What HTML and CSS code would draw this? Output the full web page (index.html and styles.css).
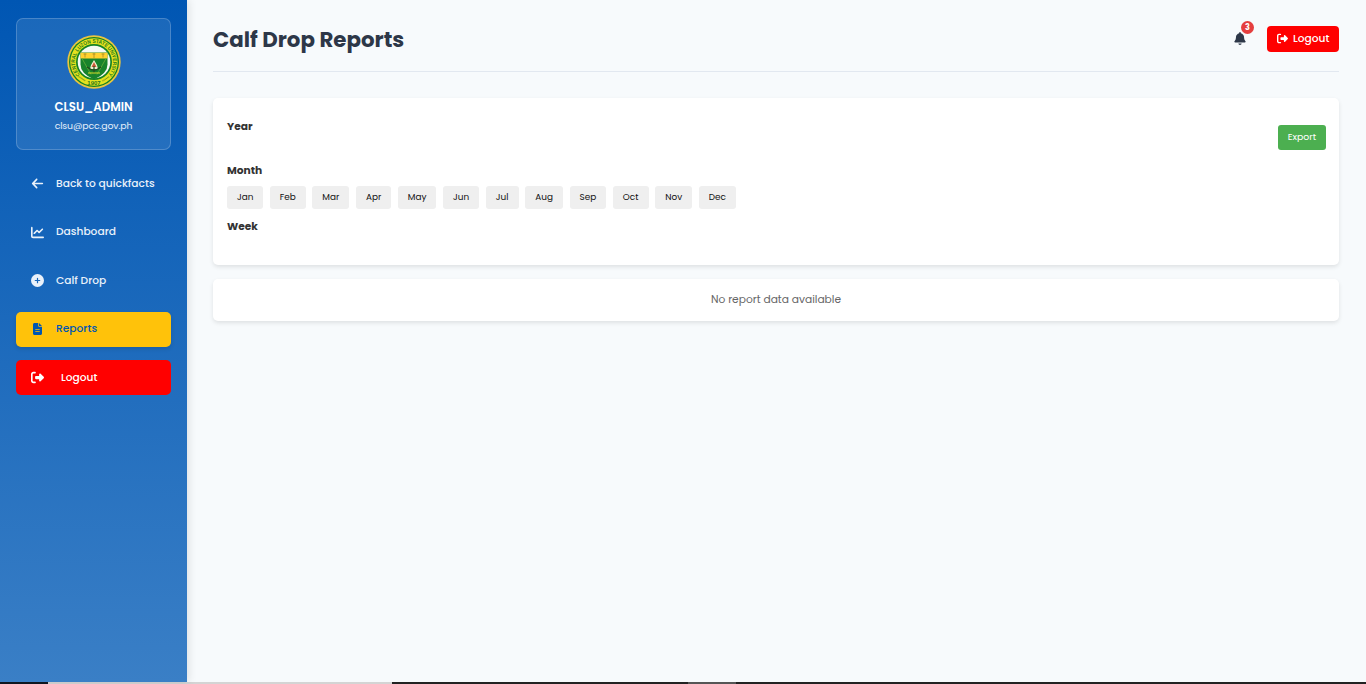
FILE: index.html
```html
<!DOCTYPE html>
<html lang="en">
<head>
<meta charset="utf-8">
<title>Calf Drop Reports</title>
<link rel="stylesheet" href="styles.css">
</head>
<body>
<svg class="defs" aria-hidden="true">
  <symbol id="signout" viewBox="0 0 512 512"><path fill="currentColor" d="M377.900 105.900L500.700 228.700c7.200 7.200 11.300 17.100 11.300 27.300s-4.100 20.100-11.300 27.300L377.900 406.100c-6.400 6.400-15 9.900-24 9.900c-18.700 0-33.900-15.200-33.900-33.900V320H192c-17.700 0-32-14.300-32-32V224c0-17.700 14.300-32 32-32H320V129.900c0-18.700 15.200-33.900 33.900-33.900c9 0 17.600 3.600 24 9.900zM160 96H96c-17.700 0-32 14.300-32 32V384c0 17.700 14.300 32 32 32h64c17.700 0 32 14.300 32 32s-14.300 32-32 32H96c-53 0-96-43-96-96V128C0 75 43 32 96 32h64c17.700 0 32 14.300 32 32s-14.300 32-32 32z"/></symbol>
</svg>
<div class="app">
  <aside class="sidebar">
    <section class="profile">
      <svg class="seal" viewBox="0 0 54 54">
        <defs>
          <path id="ring" d="M12.900 39.700A19 19 0 1 1 41.100 39.700"/>
          <clipPath id="shield"><path d="M13.500 17.500h27v12q0 9-13.500 15q-13.500-6-13.500-15z"/></clipPath>
        </defs>
        <circle cx="27" cy="27" r="26.700" fill="#e9c63e"/>
        <circle cx="27" cy="27" r="25" fill="#168223"/>
        <circle cx="27" cy="27" r="23.700" fill="#e3e21e"/>
        <circle cx="27" cy="27" r="18" fill="#168223"/>
        <circle cx="27" cy="27" r="16.300" fill="#f5faf3"/>
        <text class="seal-name" textLength="87" lengthAdjust="spacingAndGlyphs"><textPath href="#ring">CENTRAL LUZON STATE UNIVERSITY</textPath></text>
        <path d="M11.500 41.500l7 4.500M35.500 46l7-4.500" stroke="#77931c" stroke-width="1.200" stroke-dasharray="1 .4"/>
        <g clip-path="url(#shield)">
          <path fill="#18832b" d="M13 17h28v28H13z"/>
          <path fill="#ffd12e" d="M13 17.500h28v6H13z"/>
          <path d="M15 23.500l9 16M39 23.500l-9 16" stroke="#56a437"/>
          <path d="M18 18.500v4M27 18v5M36 18.500v4M16.500 19h3M25.500 19h3M34.500 19h3" stroke="#a38b24" stroke-width=".8"/>
          <path fill="#f0f2d0" d="M27 25l3 5 1 4h-8l1-4z"/>
          <path fill="#ca5a38" d="M27 27l2.500 5h-5z"/>
          <path d="M20 32l5 3h4l5-3M27 31v7" fill="none" stroke="#23491e" stroke-width="1.200"/>
          <path d="M21 38h12" stroke="#d4dc2c"/>
        </g>
        <text class="seal-year" x="27" y="49.900">1907</text>
      </svg>
      <div class="name">CLSU_ADMIN</div>
      <div class="email">clsu@pcc.gov.ph</div>
    </section>
    <nav class="menu">
      <a class="item"><svg class="icon" viewBox="-32 0 512 512"><path fill="currentColor" d="M9.400 233.400c-12.500 12.500-12.500 32.800 0 45.300l160 160c12.500 12.500 32.800 12.500 45.300 0s12.500-32.800 0-45.300L109.200 288H416c17.700 0 32-14.300 32-32s-14.300-32-32-32H109.300L214.600 118.600c12.500-12.500 12.500-32.800 0-45.300s-32.800-12.500-45.300 0l-160 160z"/></svg><span class="label">Back to quickfacts</span></a>
      <a class="item"><svg class="icon" viewBox="0 0 512 512"><path fill="currentColor" d="M64 64c0-17.700-14.300-32-32-32S0 46.300 0 64V400c0 44.200 35.800 80 80 80H480c17.700 0 32-14.300 32-32s-14.300-32-32-32H80c-8.800 0-16-7.200-16-16V64zm406.600 86.600c12.500-12.500 12.500-32.800 0-45.300s-32.800-12.500-45.300 0L320 210.700l-57.400-57.400c-12.500-12.500-32.800-12.500-45.300 0l-112 112c-12.500 12.500-12.500 32.800 0 45.300s32.800 12.500 45.300 0L240 221.300l57.400 57.400c12.500 12.500 32.800 12.500 45.300 0l128-128z"/></svg><span class="label">Dashboard</span></a>
      <a class="item"><svg class="icon" viewBox="0 0 512 512"><path fill="currentColor" d="M256 512A256 256 0 1 0 256 0a256 256 0 1 0 0 512zM232 344V280H168c-13.300 0-24-10.700-24-24s10.700-24 24-24h64V168c0-13.300 10.700-24 24-24s24 10.700 24 24v64h64c13.300 0 24 10.700 24 24s-10.700 24-24 24H280v64c0 13.300-10.700 24-24 24s-24-10.700-24-24z"/></svg><span class="label">Calf Drop</span></a>
      <a class="item active"><svg class="icon file" viewBox="-64 0 512 512"><path fill="currentColor" d="M64 0C28.700 0 0 28.700 0 64V448c0 35.300 28.700 64 64 64H320c35.300 0 64-28.700 64-64V160H256c-17.700 0-32-14.300-32-32V0H64zM256 0V128H384L256 0zM112 256H272c8.800 0 16 7.200 16 16s-7.200 16-16 16H112c-8.800 0-16-7.200-16-16s7.200-16 16-16zm0 96H272c8.800 0 16 7.200 16 16s-7.200 16-16 16H112c-8.800 0-16-7.200-16-16s7.200-16 16-16z"/></svg><span class="label">Reports</span></a>
      <a class="item logout"><svg class="icon"><use href="#signout"/></svg><span class="label out">Logout</span></a>
    </nav>
  </aside>
  <main class="main">
    <header class="header">
      <h1 class="title">Calf Drop Reports</h1>
      <div class="actions">
        <div class="bell"><svg class="bell-icon" viewBox="0 0 448 512"><path fill="currentColor" d="M224 0c-17.700 0-32 14.300-32 32V51.200C119 66 64 130.600 64 208v18.800c0 47-17.300 92.400-48.500 127.600l-7.400 8.300c-8.400 9.400-10.400 22.900-5.300 34.400S19.400 416 32 416H416c12.600 0 24-7.400 29.200-18.900s3.100-25-5.300-34.400l-7.400-8.300C401.300 319.200 384 273.900 384 226.800V208c0-77.400-55-142-128-156.800V32c0-17.700-14.300-32-32-32zm45.300 493.300c12-12 18.700-28.300 18.700-45.300H160c0 17 6.700 33.300 18.700 45.300s28.300 18.700 45.300 18.700s33.300-6.700 45.300-18.700z"/></svg><span class="badge">3</span></div>
        <button class="top-logout"><svg class="out-icon"><use href="#signout"/></svg><span>Logout</span></button>
      </div>
    </header>
    <section class="card filters">
      <div class="fields">
        <h2 class="field">Year</h2>
        <h2 class="field month">Month</h2>
        <div class="months">
          <button class="chip">Jan</button><button class="chip">Feb</button><button class="chip">Mar</button><button class="chip">Apr</button><button class="chip">May</button><button class="chip">Jun</button><button class="chip">Jul</button><button class="chip">Aug</button><button class="chip">Sep</button><button class="chip">Oct</button><button class="chip">Nov</button><button class="chip">Dec</button>
        </div>
        <h2 class="field week">Week</h2>
      </div>
      <button class="export">Export</button>
    </section>
    <section class="card empty"><span>No report data available</span></section>
  </main>
</div>
<footer class="edge"></footer>
</body>
</html>
```
FILE: styles.css
```css
* { box-sizing: border-box; }
body { margin: 0; height: 684px; overflow: hidden; background: #f7fafc; font-family: Poppins, Inter, sans-serif; color: #333; }
h1, h2 { margin: 0; }
button { border: 0; padding: 0; font-family: inherit; white-space: nowrap; }
svg { display: block; flex: none; }
.defs { display: none; }
.app { display: flex; height: 682px; }
.sidebar { width: 187px; flex: none; padding: 18px 16px; color: #fff; background: linear-gradient(#0056b3, #3a7fc6); box-shadow: 2px 0 8px rgba(0,0,0,.1); }
.profile { height: 132px; display: flex; flex-direction: column; align-items: center; padding-top: 16px; border: 1px solid rgba(255,255,255,.2); border-radius: 7px; background: rgba(255,255,255,.1); }
.seal { width: 54px; height: 54px; }
.seal-name { font: 700 5.400px "Liberation Sans", sans-serif; fill: #28781d; }
.seal-year { font: 700 6px "Liberation Sans", sans-serif; fill: #28781d; text-anchor: middle; }
.name { margin-top: 9px; font-size: 11.730px; line-height: 18px; font-weight: 600; }
.email { margin-top: 3px; font-size: 9.330px; line-height: 14px; color: #e3eefa; letter-spacing: -.130px; }
.menu { display: grid; gap: 13.500px; margin-top: 16px; }
.item { height: 35px; display: flex; align-items: center; padding-left: 15px; border-radius: 5px; color: #e9f1fa; font-size: 10.670px; line-height: 16px; font-weight: 500; white-space: nowrap; }
.icon { width: 13px; height: 13px; }
.file { height: 12px; margin-top: -1px; }
.label { margin-left: 12px; }
.active { color: #0056b3; background: #ffc20a; box-shadow: 0 2px 4px rgba(0,0,0,.12); }
.logout { color: #fff; background: #f00; }
.out { margin-left: 17px; }
.main { flex: 1; padding: 0 27px 0 26px; }
.header { height: 72px; display: flex; justify-content: space-between; border-bottom: 1px solid #e2e8f0; }
.title { margin-top: 23px; font-size: 21.330px; line-height: 34px; font-weight: 700; color: #2d3748; white-space: nowrap; }
.actions { display: flex; align-items: flex-start; padding-top: 26px; gap: 21px; }
.bell { position: relative; padding-top: 6px; color: #2d3748; }
.bell-icon { width: 12px; height: 13px; }
.badge { position: absolute; left: 7px; top: -5px; width: 13px; height: 13px; border-radius: 50%; background: #e53e3e; color: #fff; font-size: 8px; line-height: 13px; font-weight: 700; text-align: center; }
.top-logout { width: 72px; height: 26px; display: flex; align-items: center; gap: 5px; padding: 0 0 1px 10px; border-radius: 4px; background: #f00; color: #fff; font-size: 10.670px; line-height: 16px; font-weight: 500; }
.out-icon { width: 11px; height: 11px; }
.card { background: #fff; border-radius: 5px; box-shadow: 0 2px 4px rgba(0,0,0,.1); }
.filters { height: 167px; margin-top: 26px; padding: 21px 13px 0 14px; display: flex; justify-content: space-between; }
.field { font-size: 10.670px; line-height: 16px; font-weight: 700; }
.month { margin-top: 28px; }
.months { display: grid; grid-template-columns: 36.300px 35.800px 37px 35.400px 38.500px 36.200px 32.800px 38px 36.300px 36px 37px 37px; gap: 6.600px; margin-top: 7px; }
.chip { height: 23px; padding-bottom: 1px; border-radius: 3px; background: #efefef; color: #111; font-size: 8.890px; }
.week { margin-top: 10px; }
.export { width: 48px; height: 25px; padding-bottom: 2px; margin-top: 6px; border-radius: 3px; background: #4caf50; color: #fff; font-size: 9.330px; }
.empty { height: 42px; margin-top: 14px; display: flex; align-items: center; justify-content: center; color: #666; font-size: 10.670px; line-height: 16px; }
.edge { height: 2px; background: linear-gradient(90deg, #101722 48px, #d4d4d4 48px 392px, #222 392px 688px, #555 688px 736px, #222 736px); }
```
